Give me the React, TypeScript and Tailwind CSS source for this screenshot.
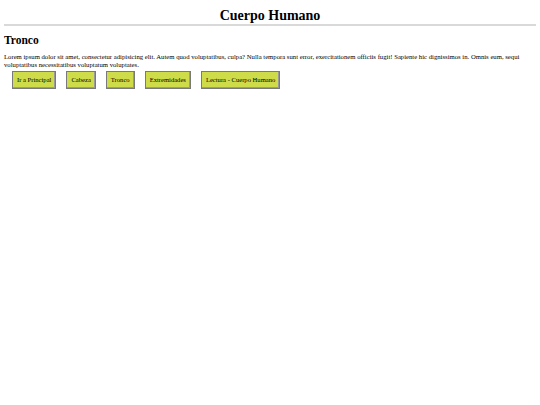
export default function App() {
  const links = ["Ir a Principal", "Cabeza", "Tronco", "Extremidades", "Lectura - Cuerpo Humano"];

  return (
    <div className="min-h-screen bg-white px-[4px] text-black" style={{ fontFamily: '"Liberation Serif", "Times New Roman", serif' }}>
      <header className="border-b-2 border-[#d9d9d9] pt-[9px] pb-[1px]">
        <h1 className="text-center text-[14px] font-bold leading-[14px]">Cuerpo Humano</h1>
      </header>

      <main>
        <h2 className="mt-[7px] text-[11.5px] font-bold leading-[14px]">Tronco</h2>

        <p className="mt-[6px] text-[6.7px] leading-[8px]">
          Lorem ipsum dolor sit amet, consectetur adipisicing elit. Autem quod voluptatibus, culpa? Nulla tempora sunt error, exercitationem officiis fugit! Sapiente hic dignissimos in. Omnis eum, sequi voluptatibus necessitatibus voluptatum voluptates.
        </p>

        <nav className="mt-[2px] flex gap-[10px] pl-[8px]">
          {links.map((label) => (
            <a
              key={label}
              href="#"
              className="border border-[#7a7a7a] bg-[#cddc48] px-[4px] py-[4px] text-[6.6px] leading-[7.5px] text-black shadow-[inset_-1px_-1px_0_#9a9a9a]"
            >
              {label}
            </a>
          ))}
        </nav>
      </main>
    </div>
  );
}
